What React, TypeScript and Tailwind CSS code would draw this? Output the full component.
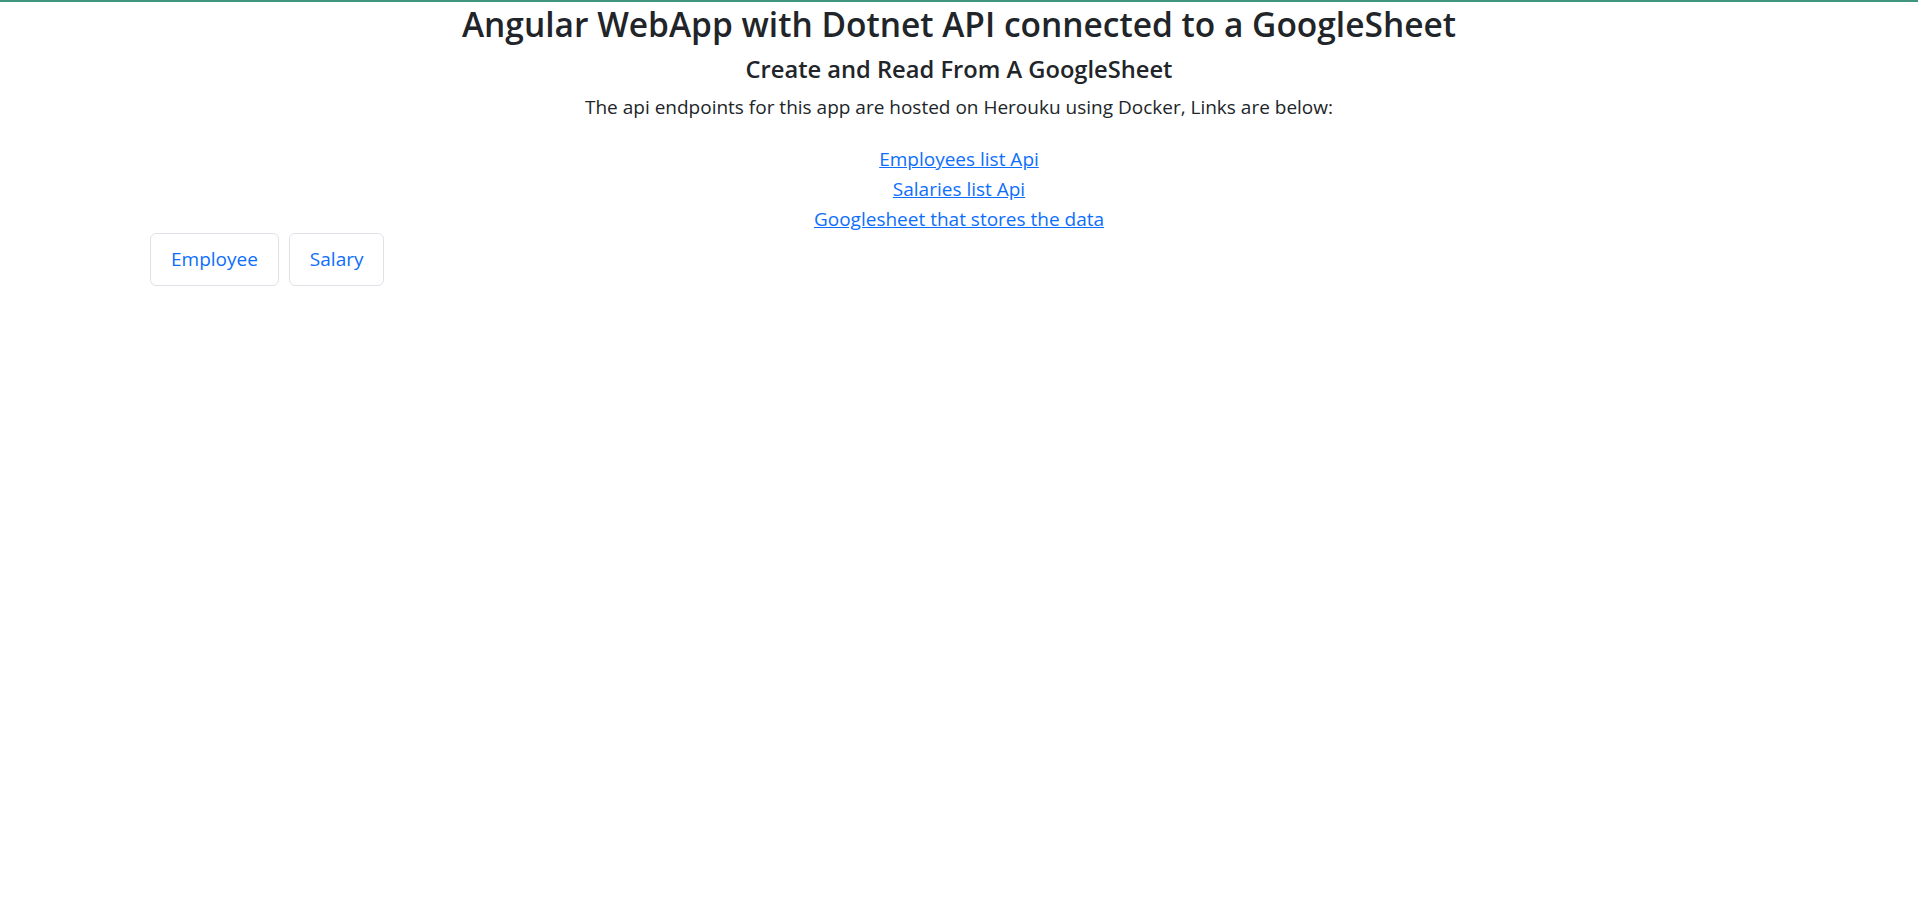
import React from "react";

const links = [
  { text: "Employees list Api", href: "#employees" },
  { text: "Salaries list Api", href: "#salaries" },
  { text: "Googlesheet that stores the data", href: "#sheet" },
];

export default function App() {
  return (
    <div className="min-h-[900px] bg-white border-t-2 border-[#3f9580] text-[#212529] font-['Open_Sans',sans-serif]">
      <div className="mx-auto w-[1650px] px-[15px]">
        <div className="text-center">
          <h1 className="text-[33.5px] leading-[44px] font-semibold">
            Angular WebApp with Dotnet API connected to a GoogleSheet
          </h1>
          <h4 className="mt-[8px] text-[23.7px] leading-[30px] font-semibold">Create and Read From A GoogleSheet</h4>
          <p className="mt-[8px] text-[19px] leading-[30px]">
            The api endpoints for this app are hosted on Herouku using Docker, Links are below:
          </p>
          <div className="mt-[22px] flex flex-col items-center">
            {links.map((l) => (
              <a key={l.text} href={l.href} className="text-[19px] leading-[30px] text-[#0d6efd] underline">
                {l.text}
              </a>
            ))}
          </div>
        </div>
        <div className="-mt-[1px] pl-[1px] flex gap-[10px]">
          <button className="h-[53px] px-[20px] rounded-[6px] border border-[#dee2e6] bg-white text-[19px] text-[#0d6efd]">
            Employee
          </button>
          <button className="h-[53px] px-[20px] rounded-[6px] border border-[#dee2e6] bg-white text-[19px] text-[#0d6efd]">
            Salary
          </button>
        </div>
      </div>
    </div>
  );
}
